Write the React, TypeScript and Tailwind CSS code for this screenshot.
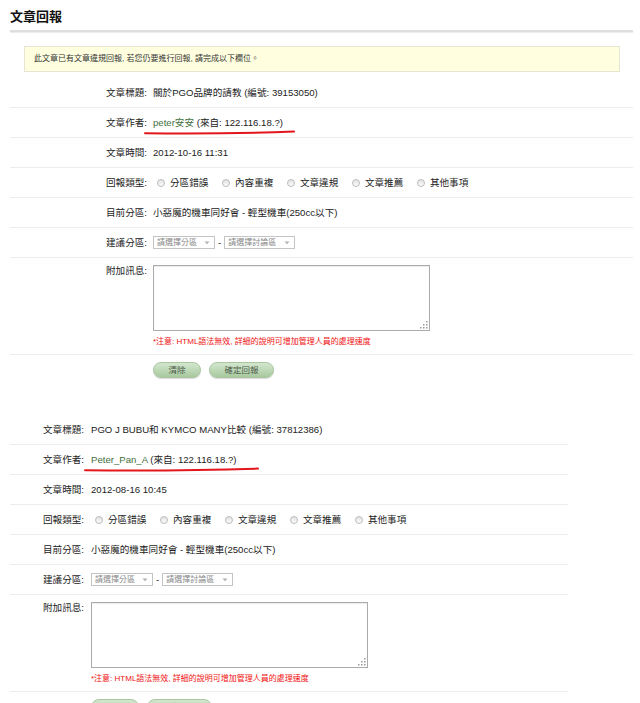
import clsx from 'clsx';

const FONT = "font-['Liberation_Sans','Noto_Sans_CJK_TC',sans-serif]";
const TYPES = ['分區錯誤', '內容重複', '文章違規', '文章推薦', '其他事項'];

type Layout = {
  label: string; // label column width + gap
  width: string; // table width
  line: string; // red marker position under the author
};

type Report = {
  title: string;
  id: string;
  author: string;
  time: string;
};

function Row({
  lw,
  label,
  children,
  className = 'h-[30px] items-center',
  border = true,
}: {
  lw: string;
  label?: string;
  children: React.ReactNode;
  className?: string;
  border?: boolean;
}) {
  return (
    <div className={clsx('flex', border && 'border-b border-[#ececec]', className)}>
      <div className={clsx('shrink-0 text-right text-[#222]', lw)}>{label}</div>
      <div className="min-w-0">{children}</div>
    </div>
  );
}

function Radio({ text }: { text: string }) {
  return (
    <span className="flex items-center">
      <span className="ml-[4px] h-[8px] w-[8px] rounded-full border border-[#bcbcbc] bg-gradient-to-b from-[#e2e2e2] to-[#fcfcfc]" />
      <span className="ml-[5px] mr-[9.6px] text-[#222]">{text}</span>
    </span>
  );
}

function FakeSelect({ text, w }: { text: string; w: string }) {
  return (
    <span
      className={clsx(
        'flex h-[13px] items-center justify-between border border-[#c4c4c4] bg-white pl-[3px] pr-[4px] text-[8px] leading-none text-[#8a8a8a]',
        w,
      )}
    >
      <span>{text}</span>
      <svg width="6" height="4" viewBox="0 0 6 4">
        <path d="M0.5 0.5 L3 3.3 L5.5 0.5 Z" fill="#b0b0b0" />
      </svg>
    </span>
  );
}

function GreenButton({ text, w }: { text: string; w: string }) {
  return (
    <span
      className={clsx(
        'flex h-[16px] items-center justify-center rounded-full border border-[#a9c6a1] bg-gradient-to-b from-[#d3e7ce] to-[#a8c99f] text-[8.5px] text-[#4d5b4b] shadow-[0_1px_1px_rgba(0,0,0,0.15)]',
        w,
      )}
    >
      {text}
    </span>
  );
}

// dotted resize grip in the textarea's corner
function Grip() {
  const dots = [
    [6, 0],
    [3, 3],
    [6, 3],
    [0, 6],
    [3, 6],
    [6, 6],
  ];
  return (
    <svg className="absolute bottom-[2px] right-[2px]" width="8" height="8" viewBox="0 0 8 8">
      {dots.map(([x, y]) => (
        <rect key={`${x}-${y}`} x={x} y={y} width="1.5" height="1.5" fill="#9a9a9a" />
      ))}
    </svg>
  );
}

function ReportSection({ r, l }: { r: Report; l: Layout }) {
  return (
    <div className={clsx('ml-[10px]', l.width)}>
      <Row lw={l.label} label="文章標題:">
        <span className="whitespace-nowrap text-[#222]">
          {r.title} (編號: {r.id})
        </span>
      </Row>
      <Row lw={l.label} label="文章作者:">
        <span className="relative whitespace-nowrap">
          <span className="text-[#3f6f3c]">{r.author}</span>
          <span className="text-[#222]"> (來自: 122.116.18.?)</span>
          <svg
            className={clsx('absolute top-[13px] h-[5px]', l.line)}
            viewBox="0 0 150 5"
            preserveAspectRatio="none"
          >
            <path
              d="M1,3.2 C40,3.6 100,3.4 149,1.6"
              stroke="#e3161c"
              strokeWidth="2"
              fill="none"
              strokeLinecap="round"
            />
          </svg>
        </span>
      </Row>
      <Row lw={l.label} label="文章時間:">
        <span className="text-[#222]">{r.time}</span>
      </Row>
      <Row lw={l.label} label="回報類型:">
        <span className="flex items-center whitespace-nowrap">
          {TYPES.map((t) => (
            <Radio key={t} text={t} />
          ))}
        </span>
      </Row>
      <Row lw={l.label} label="目前分區:">
        <span className="whitespace-nowrap text-[#222]">小惡魔的機車同好會 - 輕型機車(250cc以下)</span>
      </Row>
      <Row lw={l.label} label="建議分區:">
        <span className="flex items-center">
          <FakeSelect text="請選擇分區" w="w-[62px]" />
          <span className="mx-[3px] text-[#222]">-</span>
          <FakeSelect text="請選擇討論區" w="w-[71px]" />
        </span>
      </Row>
      <Row lw={l.label} label="附加訊息:" className="items-start pb-[7px] pt-[7px]">
        <div className="flex flex-col">
          <div className="relative">
            <textarea
              readOnly
              className="block h-[66px] w-[277px] resize-none border border-[#ababab] bg-white shadow-[inset_0_1px_1px_rgba(0,0,0,0.08)] outline-none"
            />
            <Grip />
          </div>
          <span className="mt-[6px] whitespace-nowrap text-[8px] leading-[10px] text-[#f01010]">
            *注意: HTML語法無效, 詳細的說明可增加管理人員的處理速度
          </span>
        </div>
      </Row>
      <Row lw={l.label} border={false} className="pt-[7px]">
        <span className="flex gap-[8px]">
          <GreenButton text="清除" w="w-[48px]" />
          <GreenButton text="確定回報" w="w-[65px]" />
        </span>
      </Row>
    </div>
  );
}

export default function App() {
  return (
    <div className={clsx('h-[703px] w-[640px] overflow-hidden bg-white text-[9.6px] leading-[12px]', FONT)}>
      {/* Heading */}
      <div className="px-[8px] pt-[9px]">
        <h1 className="ml-[2px] text-[13px] font-bold leading-[16px] text-[#111]">文章回報</h1>
        <div className="ml-[2px] mr-[-1px] mt-[5px] h-[3px] border-t-2 border-b border-t-[#dedede] border-b-[#ececec]" />
      </div>

      {/* Notice */}
      <div className="ml-[24px] mr-[20px] mt-[13px] flex h-[26px] items-center border border-[#e6e6d4] bg-[#ffffe0] px-[9px] text-[8px] text-[#333]">
        此文章已有文章違規回報, 若您仍要進行回報, 請完成以下欄位。
      </div>

      <div className="mt-[6px]">
        <ReportSection
          r={{ title: '關於PGO品牌的請教', id: '39153050', author: 'peter安安', time: '2012-10-16 11:31' }}
          l={{ label: 'w-[137px] mr-[6px]', width: 'w-[623px]', line: 'left-[-9px] w-[151px]' }}
        />
      </div>

      <div className="mt-[37px]">
        <ReportSection
          r={{ title: 'PGO J BUBU和 KYMCO MANY比較', id: '37812386', author: 'Peter_Pan_A', time: '2012-08-16 10:45' }}
          l={{ label: 'w-[74px] mr-[7px]', width: 'w-[558px]', line: 'left-[-7px] w-[175px]' }}
        />
      </div>
    </div>
  );
}
